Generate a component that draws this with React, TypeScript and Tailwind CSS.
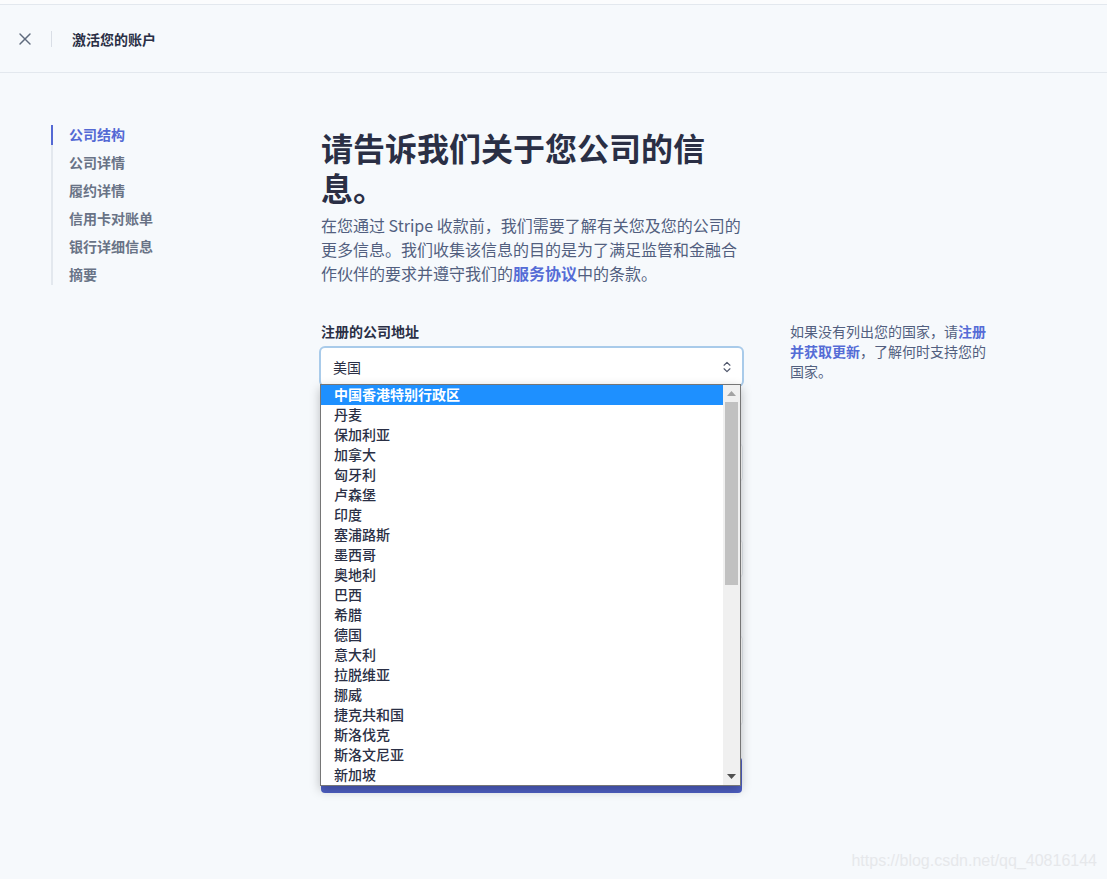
import React from "react";
import { X, ChevronsUpDown } from "lucide-react";

const navItems = ["公司结构", "公司详情", "履约详情", "信用卡对账单", "银行详细信息", "摘要"];
const countries = [
  "中国香港特别行政区",
  "丹麦",
  "保加利亚",
  "加拿大",
  "匈牙利",
  "卢森堡",
  "印度",
  "塞浦路斯",
  "墨西哥",
  "奥地利",
  "巴西",
  "希腊",
  "德国",
  "意大利",
  "拉脱维亚",
  "挪威",
  "捷克共和国",
  "斯洛伐克",
  "斯洛文尼亚",
  "新加坡",
];

export default function App() {
  return (
    <div className="relative min-h-screen w-full bg-[#f6f9fc] font-['Noto_Sans_CJK_SC','Noto_Sans',sans-serif] text-[#32325d]">
      <div className="h-1 bg-[#fbfcfd]" />
      <header className="flex h-[69px] items-center border-y border-[#e3e8ee] pl-[15px]">
        <X className="h-5 w-5 text-[#5f6b7d]" strokeWidth={1.7} />
        <div className="ml-4 h-4 w-px bg-[#d9dee6]" />
        <div className="ml-5 text-sm font-bold text-[#2a2f45]">激活您的账户</div>
      </header>

      <main className="flex pt-[52px]">
        <nav className="ml-[51px] w-[270px]">
          <ul className="relative flex w-fit flex-col gap-2 border-l-2 border-[#e3e8ee] pr-4">
            {navItems.map((item, i) => (
              <li
                key={item}
                className={
                  i === 0
                    ? "relative h-5 pl-4 text-sm leading-[19px] font-bold text-[#5469d4]"
                    : "h-5 pl-4 text-sm leading-[19px] font-bold text-[#697386]"
                }
              >
                {i === 0 && <span className="absolute -left-[2px] top-0 h-5 w-[2px] bg-[#5469d4]" />}
                {item}
              </li>
            ))}
          </ul>
        </nav>

        <section className="flex flex-col pt-[2px]">
          <h1 className="w-[400px] text-[32px] leading-[40px] font-bold text-[#2a2f45]">
            请告诉我们关于您公司的信息。
          </h1>
          <p className="mt-[6px] w-[422px] text-base leading-6 text-[#525f7f]">
            在您通过 Stripe 收款前，我们需要了解有关您及您的公司的更多信息。我们收集该信息的目的是为了满足监管和金融合作伙伴的要求并遵守我们的
            <span className="font-bold text-[#556cd6]">服务协议</span>中的条款。
          </p>

          <div className="mt-9 flex gap-[48px]">
            <div className="flex w-[421px] flex-col">
              <label className="text-sm leading-5 font-bold text-[#2a2f45]">注册的公司地址</label>
              <div className="relative mt-[7px]">
                <div className="flex h-[37px] items-center justify-between rounded bg-white pl-3 pr-2 shadow-[0_0_0_2px_#a9cbea]">
                  <span className="text-sm text-[#2a2f45]">美国</span>
                  <ChevronsUpDown className="h-[14px] w-[14px] text-[#4f566b]" strokeWidth={2} />
                </div>

                <div className="absolute left-[-1px] top-[36px] z-10 flex h-[402px] w-[421px] border border-[#767676] bg-white shadow-[0_4px_10px_rgba(0,0,0,0.25)]">
                  <ul className="flex flex-1 flex-col">
                    {countries.map((c, i) => (
                      <li
                        key={c}
                        className={
                          i === 0
                            ? "h-5 bg-[#1e90ff] pl-[13px] text-sm leading-[19px] font-bold text-white"
                            : "h-5 pl-[13px] text-sm leading-[19px] font-medium text-[#2a2f45]"
                        }
                      >
                        {c}
                      </li>
                    ))}
                  </ul>
                  <div className="flex w-[17px] flex-col bg-[#f0f0f0]">
                    <div className="flex h-[17px] items-center justify-center">
                      <svg width="9" height="5" viewBox="0 0 9 5">
                        <path d="M0 5 L4.5 0 L9 5 Z" fill="#a3a3a3" />
                      </svg>
                    </div>
                    <div className="mx-[2px] h-[183px] bg-[#c1c1c1]" />
                    <div className="flex-1" />
                    <div className="flex h-[17px] items-center justify-center">
                      <svg width="9" height="5" viewBox="0 0 9 5">
                        <path d="M0 0 L9 0 L4.5 5 Z" fill="#505050" />
                      </svg>
                    </div>
                  </div>
                </div>
              </div>

              <label className="mt-8 text-sm leading-5 font-bold text-[#2a2f45]">业务类型</label>
              <div className="mt-[7px] h-[37px] rounded bg-white shadow-[0_0_0_1px_#e3e8ee]" />
              <label className="mt-8 text-sm leading-5 font-bold text-[#2a2f45]">企业网址</label>
              <div className="mt-[7px] h-[37px] rounded bg-white shadow-[0_0_0_1px_#e3e8ee]" />
              <label className="mt-8 text-sm leading-5 font-bold text-[#2a2f45]">产品描述</label>
              <div className="mt-[7px] h-[89px] rounded bg-white shadow-[0_0_0_1px_#e3e8ee]" />
              <button className="mt-8 h-9 rounded bg-[#4e5fc4] text-sm font-bold text-white">继续</button>
            </div>

            <p className="w-[200px] text-sm leading-5 text-[#525f7f]">
              如果没有列出您的国家，请<span className="font-bold text-[#556cd6]">注册并获取更新</span>，了解何时支持您的国家。
            </p>
          </div>
        </section>
      </main>

      <div className="absolute bottom-[6px] right-[10px] font-['Liberation_Sans',sans-serif] text-[16px] text-[#e6e8eb]">
        https://blog.csdn.net/qq_40816144
      </div>
    </div>
  );
}
